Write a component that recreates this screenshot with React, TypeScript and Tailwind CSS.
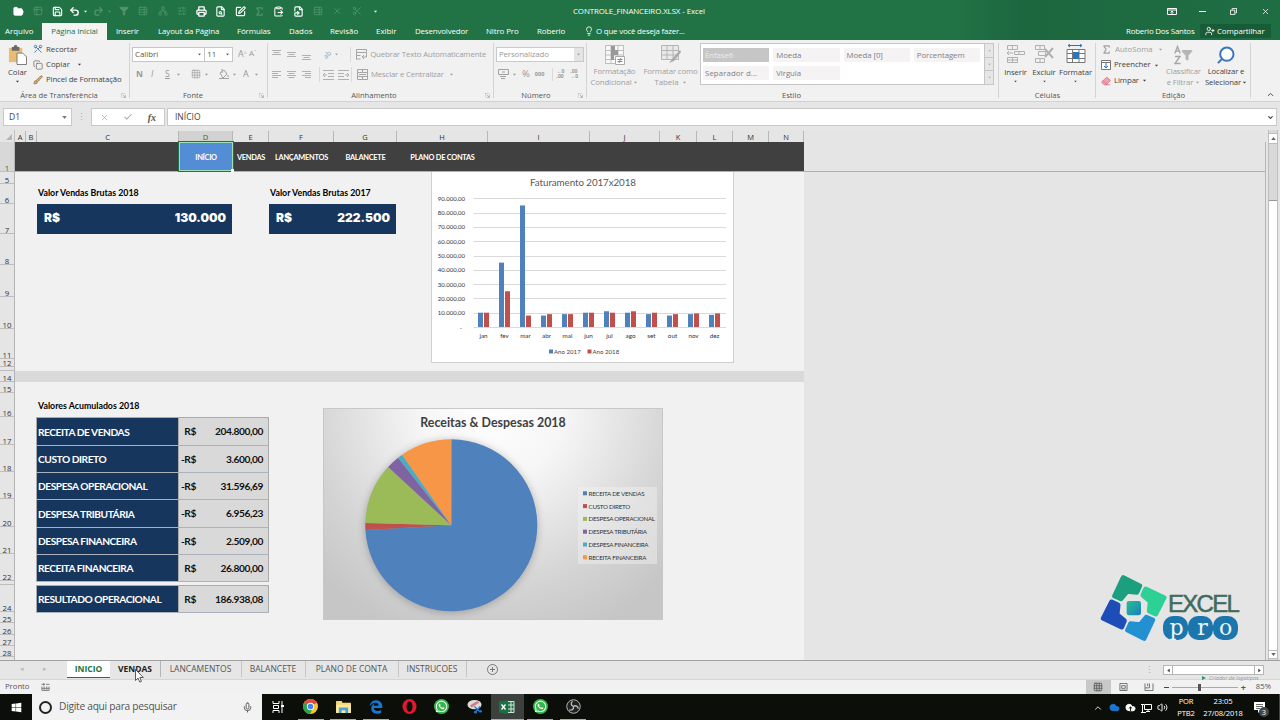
import React from 'react';
import {
  FolderOpen, Save, Undo2, Redo2, Filter, Printer, FileSearch, Sigma, ClipboardPaste, FileSymlink, Lightbulb, Scissors, Copy,
  Search, Mic, UserPlus, Grid3x3, Eraser, Table2, X, Check, Network, Volume2, Brush, TableProperties, ChevronUp, ChevronDown,
  Cloud, SquarePen, SlidersHorizontal,
} from 'lucide-react';
import { FaWindows, FaWhatsapp, FaEdgeLegacy } from 'react-icons/fa6';

const columns = [
  { name: 'A', w: 11 }, { name: 'B', w: 11 }, { name: 'C', w: 142 }, { name: 'D', w: 54 }, { name: 'E', w: 36 },
  { name: 'F', w: 65 }, { name: 'G', w: 63 }, { name: 'H', w: 91 }, { name: 'I', w: 102 }, { name: 'J', w: 70 },
  { name: 'K', w: 37 }, { name: 'L', w: 36 }, { name: 'M', w: 36 }, { name: 'N', w: 35 },
];

const rows = [
  [1, 30], [5, 12], [6, 20], [7, 30], [8, 31], [9, 32], [10, 32], [11, 30], [12, 8], [13, 4], [14, 11], [15, 11],
  [16, 24], [17, 28], [18, 27], [19, 27], [20, 28], [21, 27], [22, 27], [23, 4], [24, 27], [25, 11], [26, 12], [27, 11], [28, 11],
];

const totals = [
  { label: 'RECEITA DE VENDAS', sign: 'R$', value: '204.800,00', h: 28 },
  { label: 'CUSTO DIRETO', sign: '-R$', value: '3.600,00', h: 27 },
  { label: 'DESPESA OPERACIONAL', sign: '-R$', value: '31.596,69', h: 27 },
  { label: 'DESPESA TRIBUTÁRIA', sign: '-R$', value: '6.956,23', h: 28 },
  { label: 'DESPESA FINANCEIRA', sign: '-R$', value: '2.509,00', h: 27 },
  { label: 'RECEITA FINANCEIRA', sign: 'R$', value: '26.800,00', h: 27 },
];

const months: [string, number, number][] = [
  ['jan', 10, 10], ['fev', 45, 25], ['mar', 85, 8], ['abr', 8, 9], ['mai', 9, 9], ['jun', 10, 10],
  ['jul', 11, 10], ['ago', 10, 11], ['set', 9, 10], ['out', 8, 9], ['nov', 9, 9.5], ['dez', 8.5, 9.5],
];

const slices = [
  { label: 'RECEITA DE VENDAS', value: 204800, color: '#4f81bd' },
  { label: 'CUSTO DIRETO', value: 3600, color: '#c0504d' },
  { label: 'DESPESA OPERACIONAL', value: 31596.69, color: '#9bbb59' },
  { label: 'DESPESA TRIBUTÁRIA', value: 6956.23, color: '#8064a2' },
  { label: 'DESPESA FINANCEIRA', value: 2509, color: '#4bacc6' },
  { label: 'RECEITA FINANCEIRA', value: 26800, color: '#f79646' },
];

function Caret({ className = '' }: { className?: string }) {
  return (
    <svg viewBox="0 0 6 4" className={`h-[3px] w-[5px] shrink-0 fill-current ${className}`}>
      <path d="M0 0h6L3 4z" />
    </svg>
  );
}

function Launcher() {
  return (
    <svg viewBox="0 0 8 8" className="absolute right-1 bottom-[3px] h-[5px] w-[5px] fill-none stroke-[#999]">
      <path d="M0 7V0h7M3 3l4 4M7 3v4H3" />
    </svg>
  );
}

function Group({ label, width, launcher, children }: { label: string; width: string; launcher?: boolean; children: React.ReactNode }) {
  return (
    <div className={`relative flex h-[61px] shrink-0 flex-col ${width}`}>
      <div className="h-[50px]">{children}</div>
      <div className="text-center text-[7.6px] leading-[11px] text-[#555]">{label}</div>
      {launcher && <Launcher />}
      <div className="absolute top-[3px] right-0 h-[55px] w-px bg-[#d4d4d4]" />
    </div>
  );
}

function Lines({ kind, className = '' }: { kind: 'left' | 'center' | 'right' | 'top' | 'mid' | 'bottom' | 'indent'; className?: string }) {
  const paths = {
    left: 'M0 1.5h9M0 3.5h6M0 5.5h9M0 7.5h6',
    center: 'M0 1.5h9M1.5 3.5h6M0 5.5h9M1.5 7.5h6',
    right: 'M0 1.5h9M3 3.5h6M0 5.5h9M3 7.5h6',
    top: 'M0 .5h9M1.5 2.5h6M0 4.5h9',
    mid: 'M0 2.5h9M1.5 4.5h6M0 6.5h9',
    bottom: 'M0 5.5h9M1.5 7.5h6M0 9.5h9',
    indent: 'M0 .5h11M5 3.5h6M5 6.5h6M0 9.5h11M4 5H0M2 3L0 5l2 2',
  };
  return (
    <svg viewBox="0 0 11 10" className={`h-[10px] w-[11px] shrink-0 fill-none stroke-[#b0b0b0] ${className}`}>
      <path d={paths[kind]} />
    </svg>
  );
}

function TitleBar() {
  const dim = 'text-[#4f946c]';
  const slot = 'flex w-[19.4px] shrink-0 justify-center';
  return (
    <div className="flex h-[22px] items-center text-white">
      <div className="flex w-[573px] items-center pl-[9px]">
        <div className={slot}><FolderOpen size={11} fill="white" strokeWidth={2} /></div>
        <div className={`${slot} ${dim}`}><Table2 size={10} /></div>
        <div className={slot}><Save size={11} strokeWidth={2.5} /></div>
        <div className="flex w-[23px] items-center justify-center gap-[3px]"><Undo2 size={11} strokeWidth={3} /><Caret className="scale-75" /></div>
        <div className={`flex w-[24px] items-center justify-center gap-[3px] ${dim}`}><Redo2 size={11} strokeWidth={3} /><Caret className="scale-75" /></div>
        <div className={`${slot} ${dim}`}><Filter size={10} fill="currentColor" /></div>
        <div className={`${slot} ${dim}`}><TableProperties size={10} /></div>
        <div className={`${slot} ${dim}`}><Network size={10} /></div>
        <div className={`${slot} ${dim}`}><SlidersHorizontal size={10} /></div>
        <div className={slot}><Printer size={11} strokeWidth={2.8} /></div>
        <div className={slot}><FileSearch size={11} strokeWidth={2.4} /></div>
        <div className={slot}><SquarePen size={11} strokeWidth={2.5} /></div>
        <div className={`${slot} ${dim}`}><Sigma size={11} strokeWidth={2.5} /></div>
        <div className={slot}><ClipboardPaste size={11} strokeWidth={2.2} /></div>
        <div className={slot}><FileSymlink size={11} strokeWidth={2.4} /></div>
        <div className={`${slot} ${dim}`}><TableProperties size={10} /></div>
        <div className={`${slot} ${dim}`}><X size={10} /></div>
        <div className={`${slot} ${dim}`}><Scissors size={10} /></div>
        <div className={slot}><Caret className="mt-px scale-75" /></div>
      </div>
      <div className="w-[134px] pt-0.5 text-[7.9px] tracking-[-0.1px] whitespace-nowrap">CONTROLE_FINANCEIRO.XLSX - Excel</div>
      <div className="ml-auto flex items-center pr-[10px]">
        <svg viewBox="0 0 10 7" className="mr-[22px] h-[7px] w-[10px] fill-none stroke-white"><path d="M.5.5h9v6h-9zM.5 2h9M5 6V3M3.500 4.500L5 3l1.500 1.500" /></svg>
        <div className="mr-[24px] h-px w-[7px] bg-white" />
        <svg viewBox="0 0 8 8" className="mr-[24px] h-[7px] w-[7px] fill-none stroke-white"><path d="M.5 2.5h5v5h-5zM2.5 2V.5h5v5H6" /></svg>
        <X size={9} strokeWidth={2} />
      </div>
    </div>
  );
}

function RibbonTabs() {
  return (
    <div className="flex h-[18px] items-center text-[7.9px] leading-[17px] text-white">
      <div className="w-[42px] pl-[5px]">Arquivo</div>
      <div className="mt-px h-[17px] w-[65px] bg-[#f3f3f3] text-center tracking-[-0.1px] text-[#217346]">Página Inicial</div>
      <div className="w-[51px] pl-[9px] tracking-[-0.1px]">Inserir</div>
      <div className="w-[79px] tracking-[-0.1px]">Layout da Página</div>
      <div className="w-[52px] tracking-[-0.1px]">Fórmulas</div>
      <div className="w-[41px]">Dados</div>
      <div className="w-[46px]">Revisão</div>
      <div className="w-[39px]">Exibir</div>
      <div className="w-[71px] tracking-[-0.15px]">Desenvolvedor</div>
      <div className="w-[51px] tracking-[-0.1px]">Nitro Pro</div>
      <div className="w-[47px] tracking-[-0.1px]">Roberio</div>
      <Lightbulb size={10} className="mr-[2px]" />
      <div className="tracking-[-0.2px]">O que você deseja fazer...</div>
      <div className="ml-auto w-[74px] tracking-[-0.2px] whitespace-nowrap">Roberio Dos Santos</div>
      <div className="mr-[9px] flex h-[14px] w-[71px] items-center gap-[2px] bg-[#185c37] pl-[5px] tracking-[-0.1px]">
        <UserPlus size={10} />
        Compartilhar
      </div>
    </div>
  );
}

function Ribbon() {
  return (
    <div className="flex h-[61px] bg-[#f1f1f1] text-[7.8px] text-[#444]">
      <Group label="Área de Transferência" width="w-[130px] pr-[12px]" launcher>
        <div className="flex">
          <div className="flex w-[33px] shrink-0 flex-col items-center pt-[5px] pl-[2px]">
            <svg viewBox="0 0 20 21" className="h-[20px] w-[19px]">
              <path d="M1 3h14v15H1z" fill="#e8bd73" />
              <path d="M4 2h2a2 2 0 0 1 4 0h2v4H4z" fill="#686868" />
              <path d="M9.500 8.500h6l4 4v8h-10z" fill="white" stroke="#777" />
            </svg>
            <div className="mt-[2px] leading-[11px]">Colar</div>
            <Caret className="mt-[2px] scale-75" />
          </div>
          <div className="flex flex-col pt-[1.500px] leading-[15.4px] whitespace-nowrap">
            <div className="flex items-center gap-[3px]"><Scissors size={10} className="shrink-0 rotate-90 text-[#3f6da3]" />Recortar</div>
            <div className="flex items-center gap-[3px]"><Copy size={10} className="shrink-0 text-[#777]" />Copiar<Caret className="ml-[4px] scale-75" /></div>
            <div className="flex items-center gap-[3px] tracking-[-0.12px]"><Brush size={10} className="shrink-0 text-[#8a6a3c]" fill="#e8bd73" />Pincel de Formatação</div>
          </div>
        </div>
      </Group>

      <Group label="Fonte" width="w-[138px] pr-[12px]" launcher>
        <div className="flex pt-[7px] pl-[2px]">
          <div className="flex h-[15px] w-[74px] items-center justify-between border border-[#c6c6c6] bg-white px-[2px] text-[#555]">Calibri<Caret className="scale-75" /></div>
          <div className="-ml-px flex h-[15px] w-[29px] items-center justify-between border border-[#c6c6c6] bg-white px-[2px] text-[#555]">11<Caret className="scale-75" /></div>
          <div className="w-[16px] pl-[5px] text-[9px] text-[#999]">A<sup className="text-[5px]">^</sup></div>
          <div className="text-[8px] text-[#999]">A<sup className="text-[5px]">ˇ</sup></div>
        </div>
        <div className="flex items-center pt-[5px] pl-[6px] text-[8.5px] leading-[14px] text-[#999]">
          <div className="w-[15px] shrink-0 font-bold">N</div>
          <div className="w-[14px] shrink-0 italic">I</div>
          <div className="w-[11px] shrink-0 underline">S</div>
          <Caret className="scale-75" />
          <div className="mx-[5px] h-[12px] w-px bg-[#dadada]" />
          <Grid3x3 size={10} strokeWidth={1.5} className="shrink-0" /><Caret className="ml-[3px] scale-75" />
          <div className="mx-[5px] h-[12px] w-px bg-[#dadada]" />
          <svg viewBox="0 0 10 10" className="h-[10px] w-[10px] shrink-0 fill-none stroke-[#a0a0a0]"><path d="M1 4l4-3 3 4-4 4zM3 0v4M9 6v2M0 9.500h10" /></svg>
          <Caret className="ml-[3px] scale-75" />
          <div className="ml-[6px] w-[11px] shrink-0 text-[9px]">A</div>
          <Caret className="scale-75" />
        </div>
      </Group>

      <Group label="Alinhamento" width="w-[226px] pr-[14px]" launcher>
        <div className="flex items-center pt-[6px] pl-[4px] leading-[17px] text-[#a0a0a0]">
          <Lines kind="top" className="mr-[4px]" />
          <Lines kind="mid" className="mr-[4px]" />
          <Lines kind="bottom" />
          <div className="mr-[4px] ml-[6px] h-[15px] w-px bg-[#dadada]" />
          <div className="-rotate-45 text-[7px]">ab</div>
          <Caret className="ml-[3px] scale-75" />
          <div className="mr-[5px] ml-[11px] h-[15px] w-px shrink-0 bg-[#dadada]" />
          <svg viewBox="0 0 11 11" className="mr-[3px] h-[11px] w-[11px] shrink-0 fill-none stroke-[#a5a5a5]"><path d="M.5.5h10v3H.5zM.5 6.500h4M.5 10h4M.5 3.500v7M10.500 4v4H6l2-2M6 8l2 2" /></svg>
          <div className="tracking-[-0.14px] whitespace-nowrap">Quebrar Texto Automaticamente</div>
        </div>
        <div className="flex items-center pt-[3px] pl-[4px] leading-[17px] text-[#a0a0a0]">
          <Lines kind="left" className="mr-[4px]" />
          <Lines kind="center" className="mr-[4px]" />
          <Lines kind="right" />
          <div className="mr-[3px] ml-[6px] h-[15px] w-px bg-[#dadada]" />
          <Lines kind="indent" className="mr-[4px]" />
          <Lines kind="indent" className="-scale-x-100" />
          <div className="mr-[5px] ml-[2px] h-[15px] w-px bg-[#dadada]" />
          <svg viewBox="0 0 11 11" className="mr-[3px] h-[11px] w-[11px] shrink-0 fill-none stroke-[#a5a5a5]"><path d="M.5.5h10v10H.5zM.5 3.500h10M.5 7.500h10M5.500 0v3M5.500 8v3M2 5.500h7" /></svg>
          <div className="tracking-[-0.17px] whitespace-nowrap">Mesclar e Centralizar</div>
          <Caret className="ml-[5px] scale-75" />
        </div>
      </Group>

      <Group label="Número" width="w-[93px] pr-[9px]" launcher>
        <div className="flex pt-[7px] pl-[2px] text-[#999]">
          <div className="flex h-[15px] w-[88px] shrink-0 items-center justify-between border border-[#c9c9c9] bg-white pl-[2px] tracking-[-0.1px]">
            Personalizado
            <div className="flex h-full w-[9px] items-center justify-center bg-[#e4e4e4]"><Caret className="scale-75" /></div>
          </div>
        </div>
        <div className="flex items-center pt-[5px] pl-[4px] leading-[14px] text-[#999]">
          <svg viewBox="0 0 11 10" className="h-[10px] w-[11px] shrink-0 fill-none stroke-[#a0a0a0]"><path d="M.5.5h10v5H.5zM4 3h3M2 7.500h6M3 9.500h4" /></svg>
          <Caret className="ml-[3px] scale-75" />
          <div className="ml-[5px] text-[9.5px]">%</div>
          <div className="ml-[5px] text-[5.6px] font-bold">000</div>
          <div className="mr-[3px] ml-[8px] h-[13px] w-px shrink-0 bg-[#dadada]" />
          <div className="text-[5px] leading-[5px] font-bold">←0<br />,00</div>
          <div className="ml-[6px] text-[5px] leading-[5px] font-bold">,00<br />→0</div>
        </div>
      </Group>

      <Group label="Estilo" width="w-[412px] pr-[3px]">
        <div className="flex text-[#a0a0a0]">
          <div className="flex w-[55px] shrink-0 flex-col items-center pt-[5px] text-center leading-[11px] tracking-[-0.15px]">
            <svg viewBox="0 0 20 20" className="mb-[1px] h-[20px] w-[20px]">
              <path d="M.5.5h18v18H.5zM.5 5.500h18M.5 10h18M.5 14.500h18M6 .5v18M13 .5v18" fill="#f8f8f8" stroke="#bdbdbd" />
              <path d="M6 1h4v4H6zM6 5h7v5H6zM6 10h3v5H6z" fill="#999" />
              <path d="M10.500 11.500h9v8h-9z" fill="white" stroke="#aaa" />
              <path d="M12.500 14.500h5M12.500 16.500h5M16 13l-2 5" stroke="#888" />
            </svg>
            Formatação
            <div className="flex items-center gap-[2px]">Condicional<Caret className="scale-75" /></div>
          </div>
          <div className="flex w-[57px] shrink-0 flex-col items-center pt-[5px] text-center leading-[11px] whitespace-nowrap">
            <svg viewBox="0 0 20 20" className="mb-[1px] h-[20px] w-[20px]">
              <path d="M.5.500h17v14H.5zM.5 5.500h17M.5 10h17M6 .5v14M12 .5v14" fill="#e9e9e9" stroke="#b5b5b5" />
              <path d="M19 5l-7 8-4 5 5-2 7-9z" fill="#a8a8a8" />
            </svg>
            <div className="tracking-[-0.15px]">Formatar como</div>
            <div className="flex items-center gap-[3px]">Tabela<Caret className="scale-75" /></div>
          </div>
          <div className="mt-[3px] ml-px flex h-[42px] w-[294px] shrink-0 border border-[#c6c6c6] bg-white text-[7.8px] leading-[14px] text-[#808080]">
            <div className="grid flex-1 grid-cols-4 content-start gap-x-[4px] gap-y-[4px] pt-[4px] pr-[4px] pl-[2px] tracking-[-0.05px]">
              <div className="bg-[#c6c6c6] pl-[2px] text-[#ededed]">Ênfase6</div>
              <div className="bg-[#f5f3f4] pl-[3px]">Moeda</div>
              <div className="bg-[#f5f3f4] pl-[3px]">Moeda [0]</div>
              <div className="bg-[#f5f3f4] pl-[3px]">Porcentagem</div>
              <div className="bg-[#f5f3f4] pl-[2px] tracking-[0.1px]">Separador d...</div>
              <div className="bg-[#f5f3f4] pl-[3px]">Vírgula</div>
            </div>
            <div className="flex w-[9px] flex-col divide-y divide-[#c6c6c6] border-l border-[#c6c6c6] bg-[#e6e6e6] text-[#aaa]">
              <div className="flex flex-1 items-center justify-center"><Caret className="rotate-180 scale-60" /></div>
              <div className="flex flex-1 items-center justify-center"><Caret className="scale-60" /></div>
              <div className="flex flex-1 items-center justify-center"><Caret className="scale-60" /></div>
            </div>
          </div>
        </div>
      </Group>

      <Group label="Células" width="w-[97px]">
        <div className="flex pl-[2px] leading-[11px] tracking-[-0.1px]">
          <div className="flex w-[29px] flex-col items-center pt-[5px]">
            <svg viewBox="0 0 18 19" className="mb-[3px] h-[19px] w-[18px] fill-none stroke-[#b0b0b0]"><path d="M.5.5h10v4H.5zM5.500.5v4M7.500 6.500h10v3h-10zM12 6v3M6 8H0M2 6L0 8l2 2M.5 12.500h10v5H.5zM5.500 12v6M0 15h10" /></svg>
            Inserir
            <Caret className="mt-[2px] scale-60" />
          </div>
          <div className="flex w-[28px] flex-col items-center pt-[5px]">
            <svg viewBox="0 0 19 19" className="mb-[3px] h-[19px] w-[19px] fill-none stroke-[#b0b0b0]"><path d="M.5.500h9v4h-9zM5 .5v4M3.500 6.500h7v4h-7zM.5 13.500h9v4h-9zM5 13v5" /><path d="M10 4l8 9M18 3l-8 9" strokeWidth="2" /></svg>
            Excluir
            <Caret className="mt-[2px] scale-60" />
          </div>
          <div className="flex w-[35px] flex-col items-center pt-[4px]">
            <svg viewBox="0 0 20 20" className="mb-[3px] h-[20px] w-[20px] fill-none stroke-[#777]"><path d="M1 5.500h18v13H1zM1 9.500h18M1 14.500h18M6.500 5v14M13 5v14" fill="white" /><path d="M7 8h6v7H7z" fill="#2e75b6" stroke="none" /><path d="M2 1.500h14M4 0L2 1.500 4 3M14 0l2 1.500L14 3" stroke="#2e75b6" /></svg>
            Formatar
            <Caret className="mt-[2px] scale-60" />
          </div>
        </div>
      </Group>

      <Group label="Edição" width="w-[155px]">
        <div className="flex">
          <div className="flex w-[67px] shrink-0 flex-col pt-[2px] pl-[5px] leading-[15.4px]">
            <div className="flex items-center gap-[3px] text-[#a0a0a0]"><Sigma size={11} strokeWidth={2.5} />AutoSoma<Caret className="ml-[2px] scale-75" /></div>
            <div className="flex items-center gap-[3px] tracking-[-0.1px]">
              <svg viewBox="0 0 10 10" className="h-[10px] w-[10px] fill-white stroke-[#777]"><path d="M.5.5h9v9h-9zM.5 2.500h9" /><path d="M5 3v5M3 6l2 2 2-2" stroke="#2e75b6" fill="none" /></svg>
              Preencher<Caret className="scale-75" />
            </div>
            <div className="flex items-center gap-[3px] tracking-[-0.1px]"><Eraser size={10} className="text-[#e0708a]" fill="#f0a0b0" />Limpar<Caret className="scale-75" /></div>
          </div>
          <div className="flex w-[41px] shrink-0 flex-col items-center pt-[5px] text-center leading-[11px] tracking-[-0.15px] text-[#a0a0a0]">
            <div className="mb-[1px] flex h-[20px] items-center">
              <svg viewBox="0 0 7 20" className="h-[20px] w-[7px] fill-none stroke-[#a5a5a5] stroke-[1.3]"><path d="M.7 8.500L3.500 1.500l2.800 7M1.700 6h3.600M1 11.500h5L1 18.500h5.500" /></svg>
              <Filter size={12} fill="#b5b5b5" stroke="#b5b5b5" />
            </div>
            Classificar
            <div className="flex items-center gap-[2px] whitespace-nowrap">e Filtrar<Caret className="scale-75" /></div>
          </div>
          <div className="flex w-[44px] shrink-0 flex-col items-center pt-[5px] text-center leading-[11px] tracking-[-0.15px] whitespace-nowrap">
            <Search size={20} className="mb-[1px] -scale-x-100 text-[#3a76bf]" fill="white" strokeWidth={2.4} />
            Localizar e
            <div className="flex items-center gap-[1px]">Selecionar<Caret className="scale-75" /></div>
          </div>
        </div>
      </Group>
      <div className="ml-auto flex items-end pr-[5px] pb-[2px]"><ChevronUp size={9} strokeWidth={2.5} /></div>
    </div>
  );
}

function FormulaBar() {
  return (
    <div className="flex h-[29px] border-t border-[#d2d2d2] bg-[#e6e6e6] pt-[6px] pl-[3px] text-[8.5px] text-[#444]">
      <div className="flex h-[18px] w-[69px] items-center justify-between border border-[#c9c9c9] bg-white px-[5px]">D1<Caret className="-mr-px text-[#777]" /></div>
      <div className="flex h-[18px] w-[19px] items-center justify-center text-[#aaa]">⋮</div>
      <div className="flex h-[18px] w-[74px] items-center justify-between border border-[#c9c9c9] bg-white px-[8px] text-[#aaa]">
        <X size={9} /><Check size={10} strokeWidth={2.5} />
        <span className="font-['Liberation_Serif'] text-[10px] font-bold text-[#555] italic">fx</span>
      </div>
      <div className="ml-[2px] flex h-[18px] flex-1 items-center justify-between border border-[#c9c9c9] bg-white px-[7px]">
        INÍCIO
        <ChevronDown size={7} strokeWidth={4} className="-mr-[5px]" />
      </div>
      <div className="w-[3px]" />
    </div>
  );
}

function BarChart() {
  return (
    <svg width="303" height="191" viewBox="431 172 303 191" className="absolute top-0 left-[416px] font-['Lato']">
      <rect x="431.5" y="170" width="302" height="192.5" fill="white" stroke="#d0d0d0" />
      <text x="583" y="186" textAnchor="middle" fontSize="9.8" letterSpacing="-.08" fill="#595959">Faturamento 2017x2018</text>
      {[0, 1, 2, 3, 4, 5, 6, 7, 8, 9].map((n) => (
        <g key={n}>
          <path d={`M473.5 ${Math.round(327 - n * 14.3) + 0.5}H726`} stroke="#dadada" />
          <text x={n ? 465 : 462} y={329.5 - n * 14.3} textAnchor="end" fontSize="6" fill="#333">{n ? `${n}0.000,00` : '-'}</text>
        </g>
      ))}
      {months.map(([name, a, b], i) => {
        const x = 483.5 + i * 21;
        return (
          <g key={name}>
            <rect x={x - 5.5} y={327 - a * 1.43} width="5" height={a * 1.43} fill="#4f81bd" />
            <rect x={x + 0.5} y={327 - b * 1.43} width="5" height={b * 1.43} fill="#c0504d" />
            <text x={x} y="338.3" textAnchor="middle" fontSize="6.3" fill="#333">{name}</text>
          </g>
        );
      })}
      <rect x="549" y="349.5" width="4" height="4" fill="#4f81bd" />
      <text x="554" y="354" fontSize="6.1" fill="#444">Ano 2017</text>
      <rect x="587.5" y="349.5" width="4" height="4" fill="#c0504d" />
      <text x="592.5" y="354" fontSize="6.1" fill="#444">Ano 2018</text>
    </svg>
  );
}

function PieChart() {
  const cx = 451.3;
  const cy = 525.3;
  const r = 86;
  const sum = slices.reduce((acc, s) => acc + s.value, 0);
  const point = (v: number) => {
    const t = (v / sum) * Math.PI * 2;
    return `${cx + r * Math.sin(t)} ${cy - r * Math.cos(t)}`;
  };
  let start = 0;
  return (
    <svg width="340" height="212" viewBox="323 408 340 212" className="absolute top-[236px] left-[308px] font-['Lato']">
      <defs>
        <radialGradient id="plate" gradientUnits="userSpaceOnUse" cx="493" cy="408" r="240">
          <stop offset="0" stopColor="#ffffff" />
          <stop offset=".3" stopColor="#f6f6f6" />
          <stop offset=".75" stopColor="#d4d4d4" />
          <stop offset="1" stopColor="#c6c6c6" />
        </radialGradient>
        <filter id="soft" x="-20%" y="-20%" width="140%" height="140%"><feGaussianBlur stdDeviation="4" /></filter>
      </defs>
      <rect x="323.5" y="408.5" width="339" height="211" fill="url(#plate)" stroke="#c8c8c8" />
      <text x="493" y="427" textAnchor="middle" fontSize="12.4" fontWeight="700" letterSpacing=".02" fill="#404040">Receitas &amp; Despesas 2018</text>
      <circle cx={cx} cy={cy + 1} r={r} fill="#000" opacity=".25" filter="url(#soft)" />
      {slices.map((s) => {
        const from = point(start);
        start += s.value;
        return <path key={s.label} d={`M${cx} ${cy}L${from}A${r} ${r} 0 ${s.value / sum > 0.5 ? 1 : 0} 1 ${point(start)}Z`} fill={s.color} />;
      })}
      <rect x="578" y="487" width="79" height="77" fill="#f2f2f2" opacity=".45" />
      {slices.map((s, i) => (
        <g key={s.label}>
          <rect x="583" y={491.3 + i * 12.8} width="4" height="4" fill={s.color} />
          <text x="588.5" y={495.7 + i * 12.8} fontSize="6.2" letterSpacing="-.24" fill="#333">{s.label}</text>
        </g>
      ))}
    </svg>
  );
}

function TotalRow({ label, sign, value, h }: { label: string; sign: string; value: string; h: number }) {
  return (
    <div className="flex border-b border-[#aab2bd] text-[10.2px] font-bold tracking-[-0.4px]" style={{ height: h }}>
      <div className="flex w-[142px] items-center border-l border-[#aaa] bg-[#17365d] pt-[2px] pl-px tracking-[-0.46px] text-white">{label}</div>
      <div className="flex w-[91px] items-center justify-between border-x border-[#aaa] bg-[#d9d9d9] pt-[1px] pr-[5px] text-[#111]">
        <span className="w-[17px] text-right">{sign}</span>
        <span>{value}</span>
      </div>
    </div>
  );
}

function BrandLogo() {
  const piece = 'M250 54L299 79L290 98L261 95L243 117L224 109Z';
  return (
    <div className="absolute top-[573px] left-[1100px] flex">
      <svg viewBox="180 40 204 206" className="h-[68.7px] w-[68px]">
        <defs>
          <linearGradient id="center" x1="0" y1="0" x2="1" y2="1"><stop stopColor="#27c08e" /><stop offset="1" stopColor="#1b7fc0" /></linearGradient>
        </defs>
        <g strokeWidth="15" strokeLinejoin="round">
          <path d={piece} fill="#1c9f7d" stroke="#1c9f7d" />
          <path d={piece} fill="#2dd196" stroke="#2dd196" transform="rotate(90 281 145)" />
          <path d={piece} fill="#2291d2" stroke="#2291d2" transform="rotate(180 281 145)" />
          <path d={piece} fill="#1f4db8" stroke="#1f4db8" transform="rotate(270 281 145)" />
        </g>
        <rect x="260" y="124" width="43" height="43" rx="7" fill="url(#center)" />
      </svg>
      <div>
        <div className="mt-[19px] font-['Liberation_Sans'] text-[24px] leading-[24px] tracking-[-1.7px] text-[#3f6b60] [-webkit-text-stroke:0.5px_#3f6b60]">EXCEL</div>
        <div className="-ml-[5px] flex font-['DejaVu_Serif'] text-[22px] leading-[23px] text-[#eef6fa]">
          <div className="h-[24px] w-[25px] rounded-[10px] bg-[#1b76ad] pl-[2px] text-center">p</div>
          <div className="h-[24px] w-[25px] rounded-[10px] bg-[#1b76ad] pl-[4px] text-center">r</div>
          <div className="h-[24px] w-[25px] rounded-[10px] bg-[#1b76ad] text-center">o</div>
        </div>
      </div>
    </div>
  );
}

function Sheet() {
  return (
    <div className="flex h-[530px] bg-[#e5e5e5]">
      <div className="w-[1266px]">
        <div className="flex h-[12px] items-end text-[7.5px] leading-[12px] text-[#333]">
          <div className="flex h-full w-[15px] items-end justify-end border-r border-[#c0c0c0] p-[2px]">
            <svg viewBox="0 0 6 6" className="h-[6px] w-[6px] fill-[#b5b5b5]"><path d="M6 0v6H0z" /></svg>
          </div>
          {columns.map((c) => (
            <div
              key={c.name}
              className={`h-[11px] border-r border-[#b8b8b8] text-center ${c.name === 'D' ? 'border-b border-b-[#217346] bg-[#d2d2d2] text-[#217346]' : ''}`}
              style={{ width: c.w }}
            >
              {c.name}
            </div>
          ))}
        </div>
        <div className="flex h-[518px] border-r border-[#b5b5b5]">
          <div className="flex w-[15px] shrink-0 flex-col border-r border-[#b5b5b5] text-[7.8px] leading-[6px] text-[#333]">
            {rows.map(([n, h]) => (
              <div
                key={n}
                className={`flex items-end justify-center border-b border-[#bdbdbd] ${n === 1 ? 'bg-[#d8d8d8] text-[#217346]' : ''}`}
                style={{ height: h }}
              >
                {n !== 13 && n !== 23 && n}
              </div>
            ))}
          </div>
          <div className="flex-1 font-['Lato']">
            <div className="flex h-[30px] border-b border-[#b0b0b0]">
              <div className="flex w-[789px] bg-[#404040] text-[7.4px] font-bold tracking-[-0.26px] text-white">
                <div className="w-[164px]" />
                <div className="relative flex w-[54px] items-center justify-center border border-[#9fe0b5] bg-[#538dd5] pt-[2px] outline outline-[#217346]">
                  INÍCIO
                  <div className="absolute -right-[2px] -bottom-[2px] h-[3px] w-[3px] bg-white" />
                </div>
                <div className="flex w-[36px] items-center justify-center pt-[2px]">VENDAS</div>
                <div className="flex w-[65px] items-center justify-center pt-[2px]">LANÇAMENTOS</div>
                <div className="flex w-[63px] items-center justify-center pt-[2px]">BALANCETE</div>
                <div className="flex w-[91px] items-center justify-center pt-[2px]">PLANO DE CONTAS</div>
              </div>
            </div>
            <div className="relative flex h-[488px] w-[789px] flex-col bg-[#f1f1f1] text-black">
              <div className="flex h-[32px] items-end pb-[5px] pl-[23px] text-[8.8px] leading-[12px] font-bold">
                <div className="w-[232px]">Valor Vendas Brutas 2018</div>
                <div>Valor Vendas Brutas 2017</div>
              </div>
              <div className="flex h-[30px] pl-[22px] font-['Inter'] text-[12px] leading-[28px] font-black text-white">
                <div className="mr-[37px] flex w-[195px] justify-between bg-[#17365d] pr-[6px] pl-[7px]"><span>R$</span><span>130.000</span></div>
                <div className="flex w-[127px] justify-between bg-[#17365d] pr-[6px] pl-[7px]"><span>R$</span><span>222.500</span></div>
              </div>
              <div className="mt-[137px] h-[11px] bg-[#d9d9d9]" />
              <div className="h-[35px] pt-[17px] pl-[23px] text-[8.8px] leading-[14px] font-bold">Valores Acumulados 2018</div>
              <div className="pl-[21px]">
                <div className="w-[233px] border-t border-[#aaa]">
                  {totals.map((t) => <TotalRow key={t.label} {...t} />)}
                </div>
                <div className="mt-[3px] w-[233px] border-t border-[#aaa]">
                  <TotalRow label="RESULTADO OPERACIONAL" sign="R$" value="186.938,08" h={27} />
                </div>
              </div>
              <BarChart />
              <PieChart />
            </div>
          </div>
        </div>
      </div>
      <div className="ml-[2px] flex w-[10px] flex-col border-x border-[#bdbdbd] bg-[#d9d9d9] pt-[3px] text-[#666]">
        <div className="flex h-[11px] items-center justify-center border-y border-[#bdbdbd] bg-white"><Caret className="rotate-180" /></div>
        <div className="mt-[56px] h-[450px] border-t border-[#999] bg-white" />
        <div className="flex h-[9px] items-center justify-center border-y border-[#bdbdbd] bg-white"><Caret /></div>
      </div>
    </div>
  );
}

function SheetTabs() {
  return (
    <div className="flex h-[20px] items-start border-t border-[#a0a0a0] border-b border-b-[#d5d5d5] bg-[#e6e6e6] text-[8.5px] leading-[16px] text-[#555]">
      <div className="flex w-[67px] justify-around px-[10px] text-[7px] text-[#bbb]"><span>◂</span><span>▸</span></div>
      <div className="h-[17px] w-[43px] border-b border-[#217346] bg-white text-center font-bold text-[#217346]">INICIO</div>
      <div className="w-[51px] border-r border-[#b5b5b5] text-center font-bold text-[#222]">VENDAS</div>
      <div className="w-[81px] border-r border-[#c5c5c5] pr-px text-center">LANCAMENTOS</div>
      <div className="w-[64px] border-r border-[#c5c5c5] pr-px text-center">BALANCETE</div>
      <div className="w-[93px] border-r border-[#c5c5c5] pr-px text-center">PLANO DE CONTA</div>
      <div className="w-[68px] border-r border-[#c5c5c5] pr-px text-center">INSTRUCOES</div>
      <svg viewBox="0 0 11 11" className="mt-[3px] ml-[20px] h-[11px] w-[11px] fill-none stroke-[#777]"><circle cx="5.5" cy="5.5" r="5" /><path d="M5.5 3v5M3 5.500h5" /></svg>
      <div className="ml-auto flex pt-[4px]">
        <span className="mr-[9px] leading-[9px] text-[#aaa]">⋮</span>
        <div className="mr-[16px] flex h-[10px] w-[101px] justify-between border border-[#b5b5b5] bg-white text-[#444]">
          <div className="flex w-[9px] items-center justify-center border-r border-[#b5b5b5]"><Caret className="rotate-90 scale-90" /></div>
          <div className="flex w-[9px] items-center justify-center border-l border-[#b5b5b5]"><Caret className="-rotate-90 scale-90" /></div>
        </div>
      </div>
    </div>
  );
}

function StatusBar() {
  return (
    <div className="flex h-[14px] items-center bg-[#f1f1f1] text-[7.7px] text-[#555]">
      <div className="w-[41px] pl-[5px]">Pronto</div>
      <svg viewBox="0 0 9 9" className="h-[8px] w-[9px] fill-none stroke-[#777]"><path d="M2.500 0v3M0 1.500h4M5 1.500h4M.5 4v4.500h8V4M0 6h9M3 4v4M6 4v4" /></svg>
      <div className="ml-auto flex h-full w-[25px] items-center justify-center bg-[#c8c8c8]"><Grid3x3 size={10} strokeWidth={2} /></div>
      <div className="flex w-[25px] justify-center">
        <svg viewBox="0 0 9 9" className="h-[8px] w-[9px] fill-none stroke-[#666]"><path d="M.5.5h8v8h-8zM2.500 3h4v3h-4zM2 8h5" /></svg>
      </div>
      <div className="flex w-[26px] justify-center">
        <svg viewBox="0 0 10 9" className="h-[8px] w-[10px] fill-none stroke-[#666]"><path d="M.5.500v8h9v-8M.5 5.500h5v-5M3.500.5v3" /></svg>
      </div>
      <div className="ml-[2px] h-px w-[5px] bg-[#444]" />
      <div className="relative mx-[3px] h-px w-[66px] bg-[#aaa]"><div className="absolute -top-[3px] left-[26px] h-[7px] w-[3px] bg-[#555]" /></div>
      <div className="text-[9px] leading-[9px] font-bold">+</div>
      <div className="w-[34px] pr-[9px] text-right">85%</div>
    </div>
  );
}

function ChromeIcon() {
  return (
    <svg viewBox="0 0 16 16" className="h-[15px] w-[15px]">
      <circle cx="8" cy="8" r="8" fill="#f7c52d" />
      <path d="M8 8L1.100 4A8 8 0 0 1 14.900 4z" fill="#dd4b3e" />
      <path d="M8 8L1.100 4A8 8 0 0 0 7.500 16L10 11z" fill="#2ba24c" />
      <circle cx="8" cy="8" r="3.9" fill="white" />
      <circle cx="8" cy="8" r="3" fill="#4285f4" />
    </svg>
  );
}

function WhatsApp() {
  return (
    <div className="flex h-[15px] w-[15px] items-center justify-center rounded-full bg-[#35b84b] text-white">
      <FaWhatsapp size={13} />
    </div>
  );
}

function Task({ active, open, children }: { active?: boolean; open?: boolean; children: React.ReactNode }) {
  return (
    <div className={`flex h-full w-[32.8px] flex-col items-center ${active ? 'bg-[#3d413e]' : ''}`}>
      <div className="flex h-[25px] items-center">{children}</div>
      {open && <div className={`h-px ${active ? 'w-full' : 'w-[26px]'} bg-[#76b9ed]`} />}
    </div>
  );
}

function Taskbar() {
  return (
    <div className="flex h-[26px] items-center bg-[#0c0f09] text-white">
      <div className="flex w-[32px] justify-center"><FaWindows size={11} /></div>
      <div className="mr-[-0.5px] flex h-full w-[230px] items-center bg-[#f2f2f2] pr-[9px] pl-[7px] text-[10.2px] tracking-[-0.26px] text-[#555]">
        <div className="mr-[7px] h-[13px] w-[13px] rounded-full border-2 border-[#222]" />
        Digite aqui para pesquisar
        <Mic size={11} className="ml-auto" />
      </div>
      <Task>
        <svg viewBox="0 0 12 12" className="h-[12px] w-[12px] fill-none stroke-white"><path d="M1 0v2.500h6V0M1.500 4.500h5v3h-5zM1 12V9.500h6V12M10 0v12" /><path d="M9 4h3v2H9z" fill="white" stroke="none" /></svg>
      </Task>
      <Task open><ChromeIcon /></Task>
      <Task open>
        <svg viewBox="0 0 16 14" className="h-[13px] w-[15px]"><path d="M0 1h6l1 2h9v11H0z" fill="#f5d77a" /><path d="M0 5h16v9H0z" fill="#fbe69b" /><path d="M3 14V8h10v6h-3v-3H6v3z" fill="#45a5d8" /></svg>
      </Task>
      <Task open><FaEdgeLegacy size={14} color="#1479d4" /></Task>
      <Task>
        <svg viewBox="0 0 16 16" className="h-[15px] w-[15px]"><ellipse cx="8" cy="8" rx="7.5" ry="8" fill="#e3172d" /><ellipse cx="8" cy="8" rx="3.2" ry="5.6" fill="#0c0f09" /></svg>
      </Task>
      <Task><WhatsApp /></Task>
      <Task>
        <svg viewBox="0 0 16 16" className="h-[15px] w-[15px]"><ellipse cx="8" cy="6" rx="7.5" ry="5" fill="#dcdcdc" /><path d="M3 7l8-5 2 2-8 5z" fill="#c98080" /><path d="M8 8l6 6M14 8l-5 6" stroke="#2b7bc4" strokeWidth="1.5" /><circle cx="9" cy="14" r="1.5" fill="#2b7bc4" /><circle cx="14.5" cy="13" r="1.3" fill="#2b7bc4" /></svg>
      </Task>
      <Task active open>
        <svg viewBox="0 0 16 14" className="h-[14px] w-[16px]"><path d="M8 1.500h7v11H8z" fill="#217346" stroke="#cfe6d8" /><path d="M8 5h7M8 9h7M12 1v12" stroke="#cfe6d8" /><path d="M0 1.500L9 0v14L0 12.500z" fill="#1d7044" /><path d="M2.500 4.500l4 5M6.500 4.500l-4 5" stroke="white" strokeWidth="1.3" /></svg>
      </Task>
      <Task open><WhatsApp /></Task>
      <Task open>
        <svg viewBox="0 0 16 16" className="h-[15px] w-[15px] fill-none stroke-[#bdbdbd]"><circle cx="8" cy="8" r="7.2" fill="#222" /><path d="M8 8c-3-1-3-4-1-5.500M8 8c2.500-2 5 0 5 2.500M8 8c.5 3-2 4.500-4.500 3.500" strokeWidth="1.4" /></svg>
      </Task>
      <div className="ml-auto flex items-center pt-px">
        <ChevronUp size={10} className="mr-[6px]" />
        <Cloud size={11} fill="#1b74d0" stroke="#1b74d0" className="mr-[5px]" />
        <div className="relative mr-[5px]">
          <Cloud size={11} fill="white" stroke="white" />
          <svg viewBox="0 0 5 5" className="absolute top-[4px] left-[3px] h-[5px] w-[5px] fill-none stroke-[#222]"><path d="M2.500 5V1M.8 2.500L2.500 1l1.700 1.500" /></svg>
        </div>
        <svg viewBox="0 0 11 10" className="mr-[5px] h-[10px] w-[11px] fill-none stroke-white"><path d="M3.500 1.500h7v5h-7zM5 8.500h4M7 6.500v2M1.500 1v8M0 1.500h3M0 9.500h5" /></svg>
        <Volume2 size={11} />
      </div>
      <div className="ml-[6px] w-[24px] text-center text-[7.6px] leading-[12px] tracking-[-0.15px]">POR<br />PTB2</div>
      <div className="ml-[2px] w-[46px] text-center text-[7.6px] leading-[12px] tracking-[-0.1px] whitespace-nowrap">23:05<br />27/08/2018</div>
      <div className="relative mr-[14px] ml-[8px]">
        <svg viewBox="0 0 11 11" className="h-[11px] w-[11px]"><path d="M0 0h11v8H7l-3 3V8H0z" fill="white" /><path d="M2 2.500h7M2 4.500h7M2 6.500h4" stroke="#222" strokeWidth=".7" /></svg>
        <div className="absolute top-[5px] left-[5px] h-[10px] w-[10px] rounded-full bg-[#444] text-center text-[7.5px] leading-[10px]">3</div>
      </div>
      <div className="h-full w-px bg-[#444]" />
    </div>
  );
}

export default function App() {
  return (
    <div className="relative h-[720px] w-[1280px] overflow-hidden bg-[#e6e6e6] font-['Open_Sans',sans-serif]">
      <div className="h-[40px] bg-[#217346] bg-linear-to-r from-[#217346] from-74% via-[#1d673f] via-80% to-[#1f6e43]">
        <TitleBar />
        <RibbonTabs />
      </div>
      <Ribbon />
      <FormulaBar />
      <Sheet />
      <SheetTabs />
      <StatusBar />
      <Taskbar />
      <BrandLogo />
      <div className="absolute top-[674px] left-[1202px] flex items-center gap-[3px] text-[5.5px] leading-[8px] text-[#999] italic">
        <svg viewBox="0 0 4 4" className="h-[4px] w-[4px] fill-[#2f8f6b]"><path d="M0 0l4 2-4 2z" /></svg>
        Criador de logotipos
      </div>
      <svg viewBox="0 0 9 14" className="absolute top-[669px] left-[135px] h-[14px] w-[9px] fill-white stroke-[#333] stroke-[0.8]">
        <path d="M.5.500v11l2.500-2.400 1.800 4 1.700-.8-1.700-3.800h3.500z" />
      </svg>
    </div>
  );
}
